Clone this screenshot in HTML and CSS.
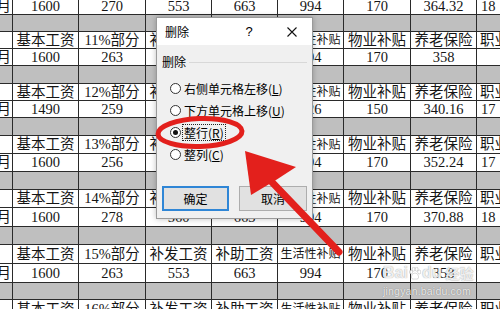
FILE: index.html
```html
<!DOCTYPE html>
<html lang="zh-CN">
<head>
  <meta charset="UTF-8">
  <title>删除 - 整行</title>
  <link rel="stylesheet" href="styles.css">
</head>
<body>
  <div class="screen">
    <div class="sheet">
      <div class="row num"><span>月</span><span>1600</span><span>270</span><span>553</span><span>663</span><span>994</span><span>170</span><span>364.32</span><span>18</span></div>
      <div class="row gap"><span></span><span></span><span></span><span></span><span></span><span></span><span></span><span></span><span></span></div>
      <div class="row"><span></span><span>基本工资</span><span>11%部分</span><span>补发工资</span><span>补助工资</span><span class="small">生活性补贴</span><span>物业补贴</span><span>养老保险</span><span>职业年金</span></div>
      <div class="row num"><span>月</span><span>1600</span><span>263</span><span>553</span><span>663</span><span>994</span><span>170</span><span>358</span><span></span></div>
      <div class="row gap tall"><span></span><span></span><span></span><span></span><span></span><span></span><span></span><span></span><span></span></div>
      <div class="row"><span></span><span>基本工资</span><span>12%部分</span><span>补发工资</span><span>补助工资</span><span class="small">生活性补贴</span><span>物业补贴</span><span>养老保险</span><span>职业年金</span></div>
      <div class="row num"><span>月</span><span>1490</span><span>259</span><span>553</span><span>663</span><span>926</span><span>150</span><span>340.16</span><span>17</span></div>
      <div class="row gap tall"><span></span><span></span><span></span><span></span><span></span><span></span><span></span><span></span><span></span></div>
      <div class="row tall"><span></span><span>基本工资</span><span>13%部分</span><span>补发工资</span><span>补助工资</span><span class="small">生活性补贴</span><span>物业补贴</span><span>养老保险</span><span>职业年金</span></div>
      <div class="row num tall"><span>月</span><span>1600</span><span>256</span><span>553</span><span>663</span><span>994</span><span>170</span><span>352.24</span><span>17</span></div>
      <div class="row gap tall"><span></span><span></span><span></span><span></span><span></span><span></span><span></span><span></span><span></span></div>
      <div class="row tall"><span></span><span>基本工资</span><span>14%部分</span><span>补发工资</span><span>补助工资</span><span class="small">生活性补贴</span><span>物业补贴</span><span>养老保险</span><span>职业年金</span></div>
      <div class="row num taller"><span>月</span><span>1600</span><span>278</span><span>560</span><span>663</span><span>994</span><span>170</span><span>370.88</span><span>18</span></div>
      <div class="row gap tall"><span></span><span></span><span></span><span></span><span></span><span></span><span></span><span></span><span></span></div>
      <div class="row taller"><span></span><span>基本工资</span><span>15%部分</span><span>补发工资</span><span>补助工资</span><span class="small">生活性补贴</span><span>物业补贴</span><span>养老保险</span><span>职业年金</span></div>
      <div class="row num taller"><span>月</span><span>1600</span><span>263</span><span>553</span><span>663</span><span>994</span><span>170</span><span>358</span><span></span></div>
      <div class="row gap"><span></span><span></span><span></span><span></span><span></span><span></span><span></span><span></span><span></span></div>
      <div class="row taller"><span></span><span>基本工资</span><span>16%部分</span><span>补发工资</span><span>补助工资</span><span class="small">生活性补贴</span><span>物业补贴</span><span>养老保险</span><span>职业年金</span></div>
    </div>

    <!-- the delete dialog sits on top of the sheet -->
    <div class="dialog">
      <div class="dialog-title">
        <span>删除</span>
        <span class="help">?</span>
        <svg class="close" width="10" height="10" viewBox="0 0 10 10">
          <path d="M0.5 0.5 L9.5 9.5 M9.5 0.5 L0.5 9.5" stroke="#111" stroke-width="1.1" fill="none"/>
        </svg>
      </div>
      <div class="dialog-body">
        <div class="group-label"><span>删除</span></div>
        <ul class="options">
          <li><i class="radio"></i><span>右侧单元格左移(<u>L</u>)</span></li>
          <li><i class="radio"></i><span>下方单元格上移(<u>U</u>)</span></li>
          <li><i class="radio checked"></i><span class="focus">整行(<u>R</u>)</span></li>
          <li><i class="radio"></i><span>整列(<u>C</u>)</span></li>
        </ul>
        <div class="buttons">
          <button class="btn primary">确定</button>
          <button class="btn">取消</button>
        </div>
      </div>
    </div>

    <!-- red marker drawn over the screenshot -->
    <svg class="marks" width="500" height="309" viewBox="0 0 500 309">
      <ellipse cx="200" cy="132.5" rx="42" ry="14" fill="none" stroke="#e3201c" stroke-width="5" transform="rotate(-2 200 132)"/>
      <line x1="268" y1="178" x2="339" y2="252" stroke="#e3201c" stroke-width="7" stroke-linecap="round"/>
      <polygon points="245,151 296,167 276,180 251,195" fill="#e3201c"/>
    </svg>

    <div class="watermark">
      <div class="logo">
        <span>Bai</span>
        <svg width="12" height="13" viewBox="0 0 12 13">
          <ellipse cx="2" cy="5" rx="1.6" ry="2" />
          <ellipse cx="4.6" cy="2.2" rx="1.5" ry="2" />
          <ellipse cx="7.6" cy="2.2" rx="1.5" ry="2" />
          <ellipse cx="10.2" cy="5" rx="1.6" ry="2" />
          <path d="M6 6 C3.5 6 2 9 2.5 11 C3 12.5 5 12 6 12 C7 12 9 12.5 9.5 11 C10 9 8.5 6 6 6 Z" />
        </svg>
        <span>du</span>
        <span class="cn">经验</span>
      </div>
      <div class="url">jingyan.baidu.com</div>
    </div>
  </div>
</body>
</html>
```

FILE: styles.css
```css
body {
  margin: 0;
  font-family: "Liberation Serif", "Noto Sans CJK SC", serif;
  background: #fff;
}

.screen {
  position: relative;
  width: 500px;
  height: 309px;
  overflow: hidden;
  background: #fff;
}

.sheet {
  margin-top: -2px;
}

.row {
  display: grid;
  grid-template-columns: 13px 66px 67px 66px 66px 66px 67px 66px 66px;
  height: 17px;
}

.row.tall {
  height: 18px;
}

.row.taller {
  height: 19px;
}

.row > span {
  display: flex;
  align-items: center;
  justify-content: center;
  overflow: hidden;
  white-space: nowrap;
  border-right: 1px solid #2a2a2a;
  border-bottom: 1px solid #2a2a2a;
  font-size: 14.5px;
  line-height: 1;
  color: #151515;
}

.row > span:first-child {
  justify-content: flex-end;
  padding-right: 1px;
}

.row > span:last-child {
  justify-content: flex-start;
  padding-left: 3px;
  border-right: 0;
}

.row.num > span:last-child {
  padding-left: 4px;
}

.row > span.small {
  font-size: 12px;
}

.gap > span {
  background: #bfbfbf;
}

/* dialog */
.dialog {
  position: absolute;
  left: 156px;
  top: 17px;
  width: 157px;
  height: 202px;
  box-sizing: border-box;
  border: 1px solid #9a9a9a;
  background: #f0f0f0;
  box-shadow: 0 0 6px rgba(0, 0, 0, 0.25);
  font-family: "Noto Sans CJK SC", sans-serif;
  font-size: 12px;
  color: #000;
}

.dialog-title {
  display: flex;
  align-items: center;
  height: 27px;
  padding-left: 8px;
  background: #fff;
}

.dialog-title .help {
  margin-left: auto;
  width: 14px;
  margin-right: 31px;
  text-align: center;
  font-family: "Liberation Sans", sans-serif;
  font-size: 13px;
}

.dialog-title .close {
  margin-right: 15px;
}

.dialog-body {
  padding: 10px 5px 0 5px;
}

.group-label {
  display: flex;
  align-items: center;
  gap: 3px;
  height: 14px;
  line-height: 14px;
}

.group-label::after {
  content: "";
  flex: 1;
  height: 1px;
  background: #d8d8d8;
}

.options {
  list-style: none;
  margin: 8px 0 0;
  padding: 0 0 0 8px;
}

.options li {
  display: flex;
  align-items: center;
  height: 22px;
  white-space: nowrap;
  font-size: 12px;
}

.radio {
  position: relative;
  width: 11px;
  height: 11px;
  box-sizing: border-box;
  border: 1px solid #333;
  border-radius: 50%;
  background: #fff;
  margin-right: 3px;
}

.radio.checked::after {
  content: "";
  position: absolute;
  left: 2px;
  top: 2px;
  width: 5px;
  height: 5px;
  border-radius: 50%;
  background: #111;
}

.focus {
  outline: 1px dotted #222;
  outline-offset: 1px;
  line-height: 13px;
}

.buttons {
  display: flex;
  gap: 10px;
  margin-top: 21px;
}

.btn {
  width: 67px;
  height: 25px;
  padding: 0;
  border: 1px solid #adadad;
  background: #e1e1e1;
  font-family: "Noto Sans CJK SC", sans-serif;
  font-size: 12px;
  color: #000;
}

.btn + .btn {
  width: 68px;
}

.btn.primary {
  border: 2px solid #2f86d6;
}

/* annotations */
.marks {
  position: absolute;
  left: 0;
  top: 0;
}

.watermark {
  position: absolute;
  left: 383px;
  top: 264px;
  color: rgba(255, 255, 255, 0.85);
  text-shadow: 0 0 1px rgba(0, 0, 0, 0.45);
}

.watermark .logo {
  display: flex;
  align-items: center;
  gap: 1px;
  font-family: "Liberation Sans", sans-serif;
  font-weight: bold;
  font-size: 16px;
  line-height: 18px;
}

.watermark .logo svg {
  fill: rgba(255, 255, 255, 0.85);
  stroke: rgba(0, 0, 0, 0.3);
  stroke-width: 0.5;
}

.watermark .cn {
  margin-left: 3px;
  font-family: "Noto Sans CJK SC", sans-serif;
  font-size: 14px;
}

.watermark .url {
  margin-top: 3px;
  font-family: "Liberation Sans", sans-serif;
  font-size: 10.5px;
  letter-spacing: 0.2px;
}
```
